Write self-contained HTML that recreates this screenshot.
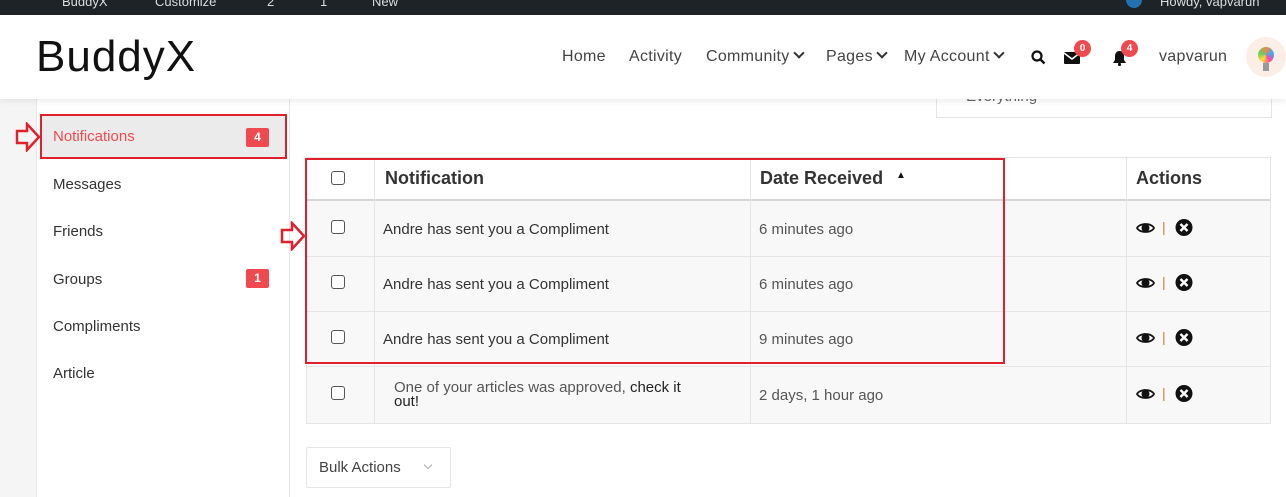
<!DOCTYPE html>
<html><head><style>
*{margin:0;padding:0;box-sizing:border-box}
body{width:1286px;height:497px;overflow:hidden;background:#fff;font-family:"Liberation Sans","DejaVu Sans",sans-serif;color:#505050;position:relative}
.a{position:absolute}
.t{font-size:15px;color:#333}
.cb{position:absolute;width:14px;height:14px;border:1px solid #555;border-radius:3px;background:#fff}
.badge{position:absolute;background:#ef4a4f;color:#fff;font-size:12px;font-weight:bold;text-align:center;border-radius:2px}
.nav{position:absolute;top:33px;font-size:16px;color:#444;white-space:nowrap;letter-spacing:.3px}
.ch{display:inline-block;width:8px;height:8px;border-right:2px solid #333;border-bottom:2px solid #333;transform:rotate(45deg);margin-left:5px;position:relative;top:-4px}
</style></head><body>
<div class="a" style="left:0;top:0;width:1286px;height:15px;background:#1d2327"></div>
<div class="a" style="left:1126px;top:0;width:16px;height:8px;border-radius:0 0 8px 8px;background:#2271b1"></div>
<div class="a" style="left:1160px;top:-6px;color:#ddd;font-size:13px">Howdy, vapvarun</div>
<div class="a" style="left:62px;top:-6px;color:#ddd;font-size:13px">BuddyX</div>
<div class="a" style="left:155px;top:-6px;color:#ddd;font-size:13px">Customize</div>
<div class="a" style="left:267px;top:-6px;color:#ddd;font-size:13px">2</div>
<div class="a" style="left:320px;top:-6px;color:#ddd;font-size:13px">1</div>
<div class="a" style="left:372px;top:-6px;color:#ddd;font-size:13px">New</div>
<div class="a" style="left:936px;top:86px;width:336px;height:32px;border:1px solid #e5e5e5;background:#fff;z-index:1"><span style="position:absolute;left:10px;top:1px;font-size:15px;color:#666">— Everything —</span></div>
<!-- header -->
<div class="a" style="left:0;top:15px;width:1286px;height:84px;background:#fff;box-shadow:0 2px 6px rgba(0,0,0,.08);z-index:2">
 <div class="a" style="left:36px;top:17px;font-size:44px;color:#111;letter-spacing:1px">BuddyX</div>
 <div class="nav" style="left:562px">Home</div>
 <div class="nav" style="left:629px">Activity</div>
 <div class="nav" style="left:706px">Community<span class="ch"></span></div>
 <div class="nav" style="left:826px">Pages<span class="ch"></span></div>
 <div class="nav" style="left:904px">My Account<span class="ch"></span></div>
 <svg class="a" style="left:1031px;top:35px" width="15" height="15" viewBox="0 0 15 15"><circle cx="6" cy="6" r="4.5" fill="none" stroke="#111" stroke-width="2.2"/><path d="M9.5 9.5L13.5 13.5" stroke="#111" stroke-width="2.4"/></svg>
 <svg class="a" style="left:1064px;top:37px" width="16" height="12"><rect width="16" height="12" rx="1" fill="#111"/><path d="M0 1L8 7L16 1" stroke="#fff" stroke-width="1.5" fill="none"/></svg>
 <div class="a" style="left:1074px;top:25px;width:17px;height:17px;border-radius:50%;background:#ef4a4f;color:#fff;font-size:10px;font-weight:bold;text-align:center;line-height:17px">0</div>
 <svg class="a" style="left:1112px;top:35px" width="15" height="16" viewBox="0 0 15 16"><path d="M7.5 1C4.5 1 3 3.5 3 6v4L1 13h13l-2-3V6c0-2.5-1.5-5-4.5-5z" fill="#111"/><circle cx="7.5" cy="14.5" r="1.6" fill="#111"/></svg>
 <div class="a" style="left:1121px;top:25px;width:17px;height:17px;border-radius:50%;background:#ef4a4f;color:#fff;font-size:10px;font-weight:bold;text-align:center;line-height:17px">4</div>
 <div class="nav" style="left:1159px">vapvarun</div>
 <div class="a" style="left:1246px;top:22px;width:40px;height:40px;border-radius:50%;background:#fbeee6;overflow:hidden">
  <div class="a" style="left:12px;top:10px;width:16px;height:16px;border-radius:50%;background:conic-gradient(#e84,#4ae,#f4a,#fd3,#6c6,#e84)"></div>
  <div class="a" style="left:17px;top:26px;width:6px;height:8px;background:#999"></div>
 </div>
</div>
<!-- left strip and sidebar -->
<div class="a" style="left:0;top:99px;width:37px;height:398px;background:#f5f5f5;border-right:1px solid #e8e8e8"></div>
<div class="a" style="left:289px;top:99px;width:1px;height:398px;background:#e6e6e6"></div>
<div class="a" style="left:40px;top:114px;width:247px;height:45px;background:#ebebeb;border:2px solid #e0202a"></div>
<div class="a" style="left:53px;top:128px;font-size:15px;color:#ef4a4f">Notifications</div>
<div class="badge" style="left:246px;top:128px;width:23px;height:19px;line-height:19px">4</div>
<svg class="a" style="left:15px;top:122px" width="26" height="30"><path d="M2 9H12V2L24 15L12 28V21H2Z" fill="none" stroke="#e0202a" stroke-width="2.5"/></svg>
<div class="a t" style="left:53px;top:176px">Messages</div>
<div class="a t" style="left:53px;top:223px">Friends</div>
<div class="a t" style="left:53px;top:271px">Groups</div>
<div class="badge" style="left:246px;top:269px;width:23px;height:19px;line-height:19px">1</div>
<div class="a t" style="left:53px;top:318px">Compliments</div>
<div class="a t" style="left:53px;top:365px">Article</div>
<!-- table -->
<div class="a" style="left:306px;top:157px;width:965px;height:267px;border:1px solid #e5e5e5;background:#f8f8f8">
 <div class="a" style="left:0;top:0;width:963px;height:43px;background:#fff;border-bottom:2px solid #d6d6d6"></div>
 <div class="a" style="left:0;top:98px;width:963px;height:1px;background:#e5e5e5"></div>
 <div class="a" style="left:0;top:153px;width:963px;height:1px;background:#e5e5e5"></div>
 <div class="a" style="left:0;top:208px;width:963px;height:1px;background:#e5e5e5"></div>
 <div class="a" style="left:67px;top:0;width:1px;height:265px;background:#e5e5e5"></div>
 <div class="a" style="left:443px;top:0;width:1px;height:265px;background:#e5e5e5"></div>
 <div class="a" style="left:819px;top:0;width:1px;height:265px;background:#e5e5e5"></div>
</div>
<div class="cb" style="left:331px;top:171px"></div>
<div class="a" style="left:385px;top:168px;font-size:18px;font-weight:bold;color:#333">Notification</div>
<div class="a" style="left:760px;top:168px;font-size:18px;font-weight:bold;color:#333">Date Received</div>
<div class="a" style="left:896px;top:170px;font-size:10px;color:#111">▲</div>
<div class="a" style="left:1136px;top:168px;font-size:18px;font-weight:bold;color:#333">Actions</div>

<div class="cb" style="left:331px;top:220px"></div>
<div class="a t" style="left:383px;top:221px">Andre has sent you a Compliment</div>
<div class="a t" style="left:759px;top:221px;color:#555">6 minutes ago</div>
<div class="cb" style="left:331px;top:275px"></div>
<div class="a t" style="left:383px;top:276px">Andre has sent you a Compliment</div>
<div class="a t" style="left:759px;top:276px;color:#555">6 minutes ago</div>
<div class="cb" style="left:331px;top:330px"></div>
<div class="a t" style="left:383px;top:331px">Andre has sent you a Compliment</div>
<div class="a t" style="left:759px;top:331px;color:#555">9 minutes ago</div>
<div class="cb" style="left:331px;top:386px"></div>
<div class="a t" style="left:394px;top:381px;line-height:14px;color:#555">One of your articles was approved, <span style="color:#222">check it<br>out!</span></div>
<div class="a t" style="left:759px;top:387px;color:#555">2 days, 1 hour ago</div>

<!-- actions icons -->
<div class="a" style="left:1136px;top:219px">
<svg width="60" height="18" viewBox="0 0 60 18"><path d="M0 9C3 2.5 16 2.5 19 9C16 15.5 3 15.5 0 9Z" fill="#111"/><path d="M2 9C5 5 14 5 17 9C14 13 5 13 2 9Z" fill="#fff"/><circle cx="9.5" cy="9" r="4" fill="#111"/><rect x="27" y="3" width="1.5" height="13" fill="#d4a060"/><circle cx="48" cy="8.5" r="8.5" fill="#111"/><path d="M44.5 5L51.5 12M51.5 5L44.5 12" stroke="#fff" stroke-width="2.5"/></svg></div>
<div class="a" style="left:1136px;top:274px">
<svg width="60" height="18" viewBox="0 0 60 18"><path d="M0 9C3 2.5 16 2.5 19 9C16 15.5 3 15.5 0 9Z" fill="#111"/><path d="M2 9C5 5 14 5 17 9C14 13 5 13 2 9Z" fill="#fff"/><circle cx="9.5" cy="9" r="4" fill="#111"/><rect x="27" y="3" width="1.5" height="13" fill="#d4a060"/><circle cx="48" cy="8.5" r="8.5" fill="#111"/><path d="M44.5 5L51.5 12M51.5 5L44.5 12" stroke="#fff" stroke-width="2.5"/></svg></div>
<div class="a" style="left:1136px;top:329px">
<svg width="60" height="18" viewBox="0 0 60 18"><path d="M0 9C3 2.5 16 2.5 19 9C16 15.5 3 15.5 0 9Z" fill="#111"/><path d="M2 9C5 5 14 5 17 9C14 13 5 13 2 9Z" fill="#fff"/><circle cx="9.5" cy="9" r="4" fill="#111"/><rect x="27" y="3" width="1.5" height="13" fill="#d4a060"/><circle cx="48" cy="8.5" r="8.5" fill="#111"/><path d="M44.5 5L51.5 12M51.5 5L44.5 12" stroke="#fff" stroke-width="2.5"/></svg></div>
<div class="a" style="left:1136px;top:385px">
<svg width="60" height="18" viewBox="0 0 60 18"><path d="M0 9C3 2.5 16 2.5 19 9C16 15.5 3 15.5 0 9Z" fill="#111"/><path d="M2 9C5 5 14 5 17 9C14 13 5 13 2 9Z" fill="#fff"/><circle cx="9.5" cy="9" r="4" fill="#111"/><rect x="27" y="3" width="1.5" height="13" fill="#d4a060"/><circle cx="48" cy="8.5" r="8.5" fill="#111"/><path d="M44.5 5L51.5 12M51.5 5L44.5 12" stroke="#fff" stroke-width="2.5"/></svg></div>

<!-- red highlight box -->
<div class="a" style="left:305px;top:158px;width:700px;height:206px;border:2px solid #e0202a"></div>
<svg class="a" style="left:280px;top:221px" width="26" height="30"><path d="M2 9H12V2L24 15L12 28V21H2Z" fill="none" stroke="#e0202a" stroke-width="2.5"/></svg>

<!-- bulk actions -->
<div class="a" style="left:306px;top:447px;width:145px;height:41px;border:1px solid #e5e5e5;border-radius:2px"></div>
<div class="a" style="left:319px;top:459px;font-size:15px;color:#444">Bulk Actions</div>
<div class="a" style="left:425px;top:462px;width:6px;height:6px;border-right:1px solid #aaa;border-bottom:1px solid #aaa;transform:rotate(45deg)"></div>
</body></html>
